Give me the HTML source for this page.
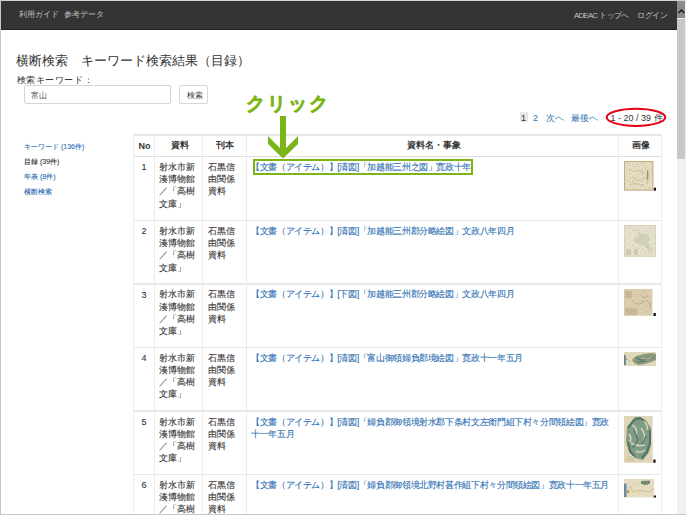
<!DOCTYPE html>
<html><head><meta charset="utf-8">
<style>
*{margin:0;padding:0;box-sizing:border-box}
html,body{width:686px;height:515px;overflow:hidden;background:#fff}
body{position:relative;font-family:"Liberation Sans",sans-serif;color:#333}
.a{position:absolute;white-space:nowrap;line-height:1}
.hl{position:absolute;background:#dddddd}
.lk{color:#2d6fb3}
.t{-webkit-text-stroke:0.1px currentColor}
</style></head><body>
<!-- frame -->
<div class="hl" style="left:0;top:0;width:686px;height:1px;background:#d4d4d4"></div>
<div class="hl" style="left:0;top:0;width:1px;height:515px;background:#c8c8c8"></div>
<div class="hl" style="left:0;top:514px;width:686px;height:1px;background:#c8c8c8"></div>

<!-- header -->
<div style="position:absolute;left:1px;top:1px;width:676px;height:28.5px;background:#343434;border-bottom:1px solid #222"></div>
<div class="a" style="left:18.5px;top:11px;font-size:8px;color:#c0c0c0">利用ガイド</div>
<div class="a" style="left:63.5px;top:11px;font-size:8px;color:#c0c0c0">参考データ</div>
<div class="a" style="left:574px;top:11.5px;font-size:8px;color:#c0c0c0"><span style="letter-spacing:-0.9px">ADEAC</span> <span style="letter-spacing:-0.7px">トップへ</span></div>
<div class="a" style="left:637px;top:11.5px;font-size:8px;color:#c0c0c0;letter-spacing:-0.5px">ログイン</div>

<!-- scrollbar -->
<div style="position:absolute;left:677px;top:1px;width:9px;height:513px;background:#f0f0f0"></div>
<div style="position:absolute;left:677px;top:1px;width:8px;height:17px;background:#8a8a8a"></div>
<div style="position:absolute;left:677px;top:19px;width:8px;height:140px;background:#c8c8c8"></div>
<svg style="position:absolute;left:677px;top:1px" width="8" height="17"><path d="M1.6 12 L4.4 9 L7.2 12" fill="none" stroke="#1a1a1a" stroke-width="1.5"/></svg>

<!-- title -->
<div class="a" style="left:16px;top:53.5px;font-size:13px;color:#333">横断検索　キーワード検索結果（目録）</div>
<div class="a" style="left:16.5px;top:75.5px;font-size:9px;color:#333;letter-spacing:0.6px">検索キーワード：</div>
<div style="position:absolute;left:24px;top:85px;width:147px;height:19px;border:1px solid #d6d6d6;border-radius:2px"></div>
<div class="a" style="left:31px;top:92px;font-size:8px;color:#555">富山</div>
<div style="position:absolute;left:179px;top:85px;width:29px;height:19px;border:1px solid #d6d6d6;border-radius:2px"></div>
<div class="a" style="left:186.5px;top:92px;font-size:8px;color:#333">検索</div>

<!-- sidebar -->
<div class="a lk t" style="left:24px;top:143px;font-size:7px">キーワード (136件)</div>
<div class="a t" style="left:24px;top:158px;font-size:7px;color:#333">目録 (39件)</div>
<div class="a lk t" style="left:24px;top:173px;font-size:7px">年表 (8件)</div>
<div class="a lk t" style="left:24px;top:188px;font-size:7px">横断検索</div>

<!-- pagination -->
<div style="position:absolute;left:520px;top:112px;width:7.5px;height:10px;background:#e6e6e6"></div>
<div class="a" style="left:521px;top:113.5px;font-size:9px;color:#333">1</div>
<div class="a lk" style="left:533px;top:113.8px;font-size:9px">2</div>
<div class="a lk" style="left:545.5px;top:114px;font-size:9px">次へ</div>
<div class="a lk" style="left:571px;top:114px;font-size:9px">最後へ</div>
<div class="a" style="left:610.5px;top:114.3px;font-size:9px;color:#333">1 - 20 / 39 件</div>
<svg style="position:absolute;left:600px;top:104px" width="72" height="26"><ellipse cx="36" cy="13.3" rx="29.3" ry="8.6" fill="none" stroke="#e60012" stroke-width="2"/></svg>

<!-- table lines -->
<div class="hl" style="left:133px;top:134px;width:528px;height:1.5px;background:#e6e6e6"></div>
<div class="hl" style="left:133px;top:155.7px;width:528px;height:1.5px"></div>
<div class="hl" style="left:133px;top:219.7px;width:528px;height:1.5px;background:#e8e8e8"></div>
<div class="hl" style="left:133px;top:283.2px;width:528px;height:1.5px;background:#e8e8e8"></div>
<div class="hl" style="left:133px;top:346.7px;width:528px;height:1.5px;background:#e8e8e8"></div>
<div class="hl" style="left:133px;top:410.2px;width:528px;height:1.5px;background:#e8e8e8"></div>
<div class="hl" style="left:133px;top:473.7px;width:528px;height:1.5px;background:#e8e8e8"></div>

<div class="hl" style="left:133px;top:134px;width:1px;height:380px;background:#ececec"></div>
<div class="hl" style="left:154px;top:134px;width:1px;height:380px;background:#ececec"></div>
<div class="hl" style="left:202px;top:134px;width:1px;height:380px;background:#ececec"></div>
<div class="hl" style="left:245.5px;top:134px;width:1px;height:380px;background:#ececec"></div>
<div class="hl" style="left:618px;top:134px;width:1px;height:380px;background:#ececec"></div>
<div class="hl" style="left:660.5px;top:134px;width:1px;height:380px;background:#ececec"></div>

<!-- header cells -->
<div class="a" style="left:138.5px;top:142.3px;font-size:9px;font-weight:bold;color:#333">No</div>
<div class="a" style="left:170.5px;top:141.4px;font-size:9px;font-weight:bold;color:#333">資料</div>
<div class="a" style="left:216px;top:141.4px;font-size:9px;font-weight:bold;color:#333">刊本</div>
<div class="a" style="left:406.5px;top:141.4px;font-size:9px;font-weight:bold;color:#333">資料名・事象</div>
<div class="a" style="left:631.5px;top:141.4px;font-size:9px;font-weight:bold;color:#333">画像</div>

<div class="a t" style="left:141.5px;top:163.30px;font-size:9px">1</div>
<div class="a t" style="left:159px;top:160.90px;font-size:9px;line-height:12.23px">射水市新<br>湊博物館<br>／「高樹<br>文庫」</div>
<div class="a t" style="left:208px;top:160.90px;font-size:9px;line-height:12.23px">石黒信<br>由関係<br>資料</div>
<div class="a lk t" style="left:251px;top:160.90px;font-size:9px;line-height:12.23px;letter-spacing:-0.37px">【文書（アイテム）】[清図]「加越能三州之図」寛政十年</div>
<div class="a t" style="left:141.5px;top:227.30px;font-size:9px">2</div>
<div class="a t" style="left:159px;top:224.90px;font-size:9px;line-height:12.23px">射水市新<br>湊博物館<br>／「高樹<br>文庫」</div>
<div class="a t" style="left:208px;top:224.90px;font-size:9px;line-height:12.23px">石黒信<br>由関係<br>資料</div>
<div class="a lk t" style="left:251px;top:224.90px;font-size:9px;line-height:12.23px;letter-spacing:-0.37px">【文書（アイテム）】[清図]「加越能三州郡分略絵図」文政八年四月</div>
<div class="a t" style="left:141.5px;top:290.70px;font-size:9px">3</div>
<div class="a t" style="left:159px;top:288.30px;font-size:9px;line-height:12.23px">射水市新<br>湊博物館<br>／「高樹<br>文庫」</div>
<div class="a t" style="left:208px;top:288.30px;font-size:9px;line-height:12.23px">石黒信<br>由関係<br>資料</div>
<div class="a lk t" style="left:251px;top:288.30px;font-size:9px;line-height:12.23px;letter-spacing:-0.37px">【文書（アイテム）】[下図]「加越能三州郡分略絵図」文政八年四月</div>
<div class="a t" style="left:141.5px;top:354.10px;font-size:9px">4</div>
<div class="a t" style="left:159px;top:351.70px;font-size:9px;line-height:12.23px">射水市新<br>湊博物館<br>／「高樹<br>文庫」</div>
<div class="a t" style="left:208px;top:351.70px;font-size:9px;line-height:12.23px">石黒信<br>由関係<br>資料</div>
<div class="a lk t" style="left:251px;top:351.70px;font-size:9px;line-height:12.23px;letter-spacing:-0.37px">【文書（アイテム）】[清図]「富山御領婦負郡境絵図」寛政十一年五月</div>
<div class="a t" style="left:141.5px;top:417.90px;font-size:9px">5</div>
<div class="a t" style="left:159px;top:415.50px;font-size:9px;line-height:12.23px">射水市新<br>湊博物館<br>／「高樹<br>文庫」</div>
<div class="a t" style="left:208px;top:415.50px;font-size:9px;line-height:12.23px">石黒信<br>由関係<br>資料</div>
<div class="a lk t" style="left:251px;top:415.50px;font-size:9px;line-height:12.23px;letter-spacing:-0.37px">【文書（アイテム）】[清図]「婦負郡御領境射水郡下条村文左衛門組下村々分間領絵図」寛政<br>十一年五月</div>
<div class="a t" style="left:141.5px;top:481.40px;font-size:9px">6</div>
<div class="a t" style="left:159px;top:479.00px;font-size:9px;line-height:12.23px">射水市新<br>湊博物館<br>／「高樹<br>文庫」</div>
<div class="a t" style="left:208px;top:479.00px;font-size:9px;line-height:12.23px">石黒信<br>由関係<br>資料</div>
<div class="a lk t" style="left:251px;top:479.00px;font-size:9px;line-height:12.23px;letter-spacing:-0.37px">【文書（アイテム）】[清図]「婦負郡御領境北野村甚作組下村々分間領絵図」寛政十一年五月</div>
<!-- thumbnails -->
<svg width="0" height="0" style="position:absolute"><defs>
<filter id="tx" x="0" y="0" width="100%" height="100%"><feTurbulence type="fractalNoise" baseFrequency="0.6" numOctaves="2" seed="3" result="n"/><feColorMatrix in="n" type="matrix" values="0 0 0 0 0.45  0 0 0 0 0.38  0 0 0 0 0.25  0 0 0 -1.4 0.75" result="c"/><feComposite in="c" in2="SourceGraphic" operator="in"/></filter>
</defs></svg>
<svg style="position:absolute;left:624px;top:161px" width="33" height="30">
 <rect x="0" y="0" width="29.3" height="29.5" fill="#e7dec5"/>
 <rect x="0" y="0" width="29.3" height="29.5" filter="url(#tx)" fill="#000"/>
 <rect x="0.4" y="0.4" width="28.5" height="28.7" fill="none" stroke="#c4a56e" stroke-width="0.9"/>
 <path d="M6 8 Q10 12 14 10 T22 14 M8 16 Q12 22 17 18 T24 22 M5 24 Q12 21 20 25" stroke="#cdbd94" stroke-width="0.8" fill="none"/>
 <rect x="23" y="9.5" width="1.3" height="9" fill="#9a8a6a"/>
 <rect x="29.8" y="26.7" width="2.2" height="2.9" fill="#111"/>
</svg>
<svg style="position:absolute;left:624px;top:225px" width="33" height="32">
 <rect x="0" y="0" width="31.8" height="31.7" fill="#e6e2cf"/>
 <rect x="0" y="0" width="31.8" height="31.7" filter="url(#tx)" fill="#000" opacity="0.7"/>
 <rect x="0.4" y="0.4" width="31" height="30.9" fill="none" stroke="#d6d0b0" stroke-width="0.8"/>
 <path d="M12 1 L15 7 L20 10 L24 9 L26 14 L24 18 L27 22 L29 26 L25 26 L21 21 L16 20 L10 17 L10 13 L15 11 Z" fill="#c4c6ae" opacity="0.6"/>
 <path d="M2 24 L7 24 L7 30 L2 30 Z M10 24 L14 24 L14 30 L10 30 Z" fill="#b8b59c" opacity="0.5"/>
</svg>
<svg style="position:absolute;left:624px;top:289px" width="33" height="28">
 <rect x="0" y="0" width="28.4" height="26.8" fill="#ddd0b0"/>
 <rect x="0" y="0" width="28.4" height="26.8" filter="url(#tx)" fill="#000"/>
 <path d="M1 2 L8 2 L8 9 L1 9 Z M1 19 L13 19 L13 26 L1 26 Z" fill="#b9a783" opacity="0.55"/>
 <path d="M8 11 Q13 18 19 13 T27 19 M16 6 Q20 10 24 7" stroke="#c0ad88" stroke-width="1" fill="none"/>
 <rect x="29.5" y="24" width="2.3" height="3" fill="#111"/>
</svg>
<svg style="position:absolute;left:624px;top:352px" width="33" height="15">
 <rect x="0" y="0" width="32" height="14" fill="#e5dbbd"/>
 <rect x="0" y="0" width="32" height="14" filter="url(#tx)" fill="#000" opacity="0.7"/>
 <path d="M8 8 L12 4 L20 2 L28 1 L32 2 L32 8 L27 10 L21 12 L14 13 L10 11 Z" fill="#7f9479" opacity="0.9"/><path d="M12 6 L18 8 L24 5 L30 6 M14 10 L22 9" stroke="#557060" stroke-width="1.2" fill="none"/>
 <path d="M17 7 L23 6 L28 5" stroke="#c9c3a0" stroke-width="0.8" fill="none"/>
 <rect x="0" y="3" width="1.8" height="10" fill="#6680a0"/>
 <rect x="1.8" y="6" width="1.5" height="2" fill="#c8a040"/>
</svg>
<svg style="position:absolute;left:624px;top:416px" width="33" height="48">
 <rect x="0" y="0" width="28.6" height="46.8" fill="#e3d8bb"/>
 <rect x="0" y="0" width="28.6" height="46.8" filter="url(#tx)" fill="#000" opacity="0.7"/>
 <path d="M11 1 L16 1 L22 5 L27 12 L27 28 L25 36 L19 44 L11 42 L5 36 L2 25 L3 11 Z" fill="#7f9c89"/>
 <path d="M4 12 L10 4 L16 2 L22 6 M26 14 L26 27 L23 36 L18 42 M4 26 L6 35 L11 41" stroke="#4f7462" stroke-width="2" fill="none"/>
 <path d="M8 9 Q14 12 12 19 M17 12 Q23 19 19 25 M7 27 Q13 31 21 29 M12 35 Q16 38 21 34 M5 18 Q8 22 6 26 M20 5 Q24 9 23 14" stroke="#d8d0ae" stroke-width="1.6" fill="none"/>
 <path d="M10 14 L14 24 L9 32 M18 28 L22 20" stroke="#557a66" stroke-width="1.4" fill="none"/>
 <path d="M2 40 L10 40 L10 46 L2 46 Z" fill="#d6cba8"/>
 <rect x="29.3" y="43.6" width="2.3" height="3.1" fill="#111"/>
</svg>
<svg style="position:absolute;left:624px;top:479px" width="33" height="19">
 <rect x="0" y="0" width="30.2" height="18.4" fill="#e9dfc2"/>
 <rect x="0" y="0" width="30.2" height="18.4" filter="url(#tx)" fill="#000" opacity="0.7"/>
 <path d="M17 2 L26 1.5 L26 4.5 L22 6 L17 5 Z" fill="#6f8c72"/>
 <rect x="0" y="4.5" width="2.6" height="13.5" fill="#6a88a8"/>
 <rect x="3" y="11" width="2.2" height="3" fill="#caa038"/>
 <path d="M5 6 Q9 8 8 12 M8 13 Q16 10 22 12 T29 9" stroke="#cfbd8f" stroke-width="1" fill="none"/>
 <rect x="29.8" y="16.5" width="2.2" height="2" fill="#111"/>
</svg>
<!-- annotation -->
<div class="a" style="left:246px;top:93px;font-size:19px;font-weight:bold;color:#7cb518;letter-spacing:2px;margin-top:1px;-webkit-text-stroke:0.6px #7cb518">クリック</div>
<svg style="position:absolute;left:0;top:0" width="686" height="515"><polygon points="280,116 286,116 286,148 298,136 298,144 283,158.5 268,144 268,136 280,148" fill="#7cb518"/></svg>
<div style="position:absolute;left:253px;top:159px;width:220px;height:16px;border:2px solid #7cb518"></div>
</body></html>
